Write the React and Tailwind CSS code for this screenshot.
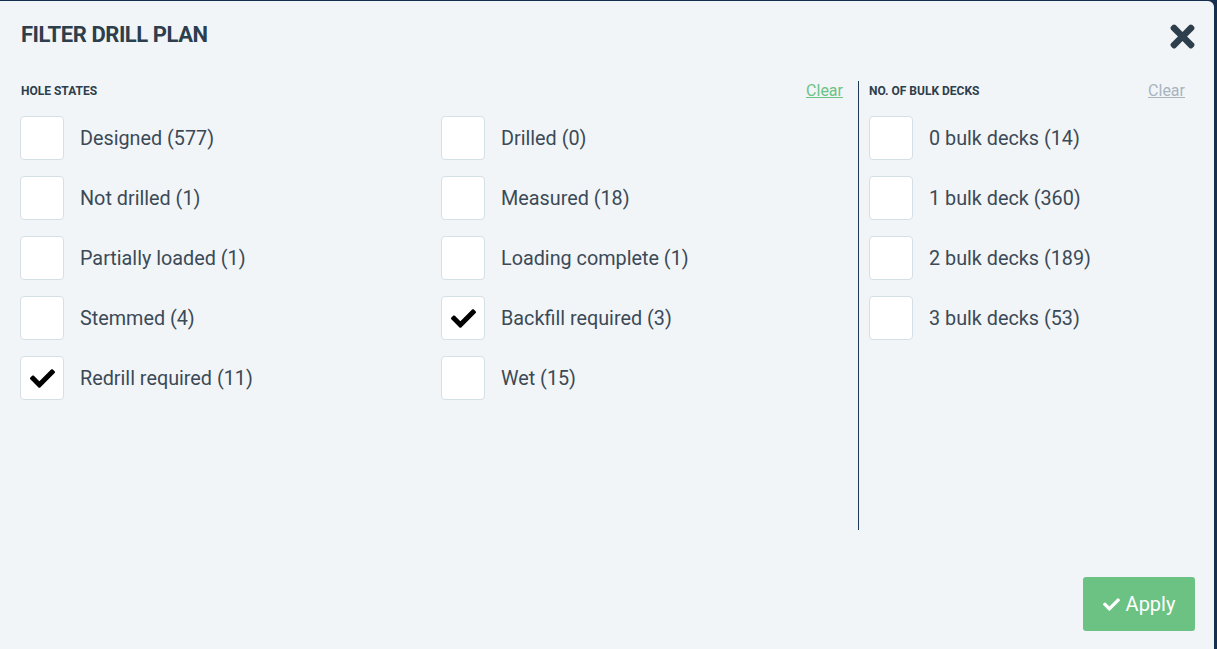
import React from 'react';
import {FaCheck, FaTimes} from 'react-icons/fa';

const holeStates = [
	['Designed (577)', false],
	['Drilled (0)', false],
	['Not drilled (1)', false],
	['Measured (18)', false],
	['Partially loaded (1)', false],
	['Loading complete (1)', false],
	['Stemmed (4)', false],
	['Backfill required (3)', true],
	['Redrill required (11)', true],
	['Wet (15)', false],
];

const bulkDecks = ['0 bulk decks (14)', '1 bulk deck (360)', '2 bulk decks (189)', '3 bulk decks (53)'];

function Check({label, checked}) {
	return (
		<div className="flex h-[44px] items-center">
			<div className="flex h-[44px] w-[44px] shrink-0 items-center justify-center rounded-[4px] border border-[#d5dfe6] bg-white">
				{checked && <FaCheck className="text-black" size={25} />}
			</div>
			<span className="ml-[16px] mt-px text-[19.8px] text-[#3b4a57]">{label}</span>
		</div>
	);
}

export default function App() {
	return (
		<div className="h-[649px] w-full overflow-hidden bg-[#15304f] pt-px pr-[3px]" style={{fontFamily: 'Roboto, "Liberation Sans", sans-serif'}}>
			<div className="flex h-full flex-col rounded-tr-[6px] bg-[#f2f5f7] pl-[20px] pr-[19px]">
				<div className="flex h-[50px] items-center justify-between pt-[16px]">
					<h2 className="ml-px text-[22px] font-bold tracking-[-0.45px] text-[#2d3e4c]">FILTER DRILL PLAN</h2>
					<FaTimes className="-mr-[5px] mt-[4px] text-[#2d3e4c]" size={35} />
				</div>
				<div className="mt-[30px] flex h-[449px]">
					<div className="w-[823px]">
						<div className="flex h-[20px] items-center justify-between">
							<span className="ml-px text-[12px] font-bold text-[#2d3e4c]">HOLE STATES</span>
							<a className="text-[16px] text-[#6cc283] underline">Clear</a>
						</div>
						<div className="mt-[15px] grid grid-cols-[421px_1fr] gap-y-[16px]">
							{holeStates.map(([label, checked]) => (
								<Check key={label} label={label} checked={checked} />
							))}
						</div>
					</div>
					<div className="ml-[15px] w-px bg-[#1f3a56]" />
					<div className="ml-[10px] w-[316px]">
						<div className="flex h-[20px] items-center justify-between">
							<span className="text-[12px] font-bold text-[#2d3e4c]">NO. OF BULK DECKS</span>
							<a className="text-[16px] text-[#a8b4be] underline">Clear</a>
						</div>
						<div className="mt-[15px] flex flex-col gap-[16px]">
							{bulkDecks.map(label => (
								<Check key={label} label={label} checked={false} />
							))}
						</div>
					</div>
				</div>
				<div className="mt-[47px] flex justify-end">
					<button className="flex h-[54px] w-[112px] items-center justify-center gap-[6px] rounded-[3px] bg-[#6cc283] text-[20px] text-white">
						<FaCheck size={17} />
						Apply
					</button>
				</div>
			</div>
		</div>
	);
}
